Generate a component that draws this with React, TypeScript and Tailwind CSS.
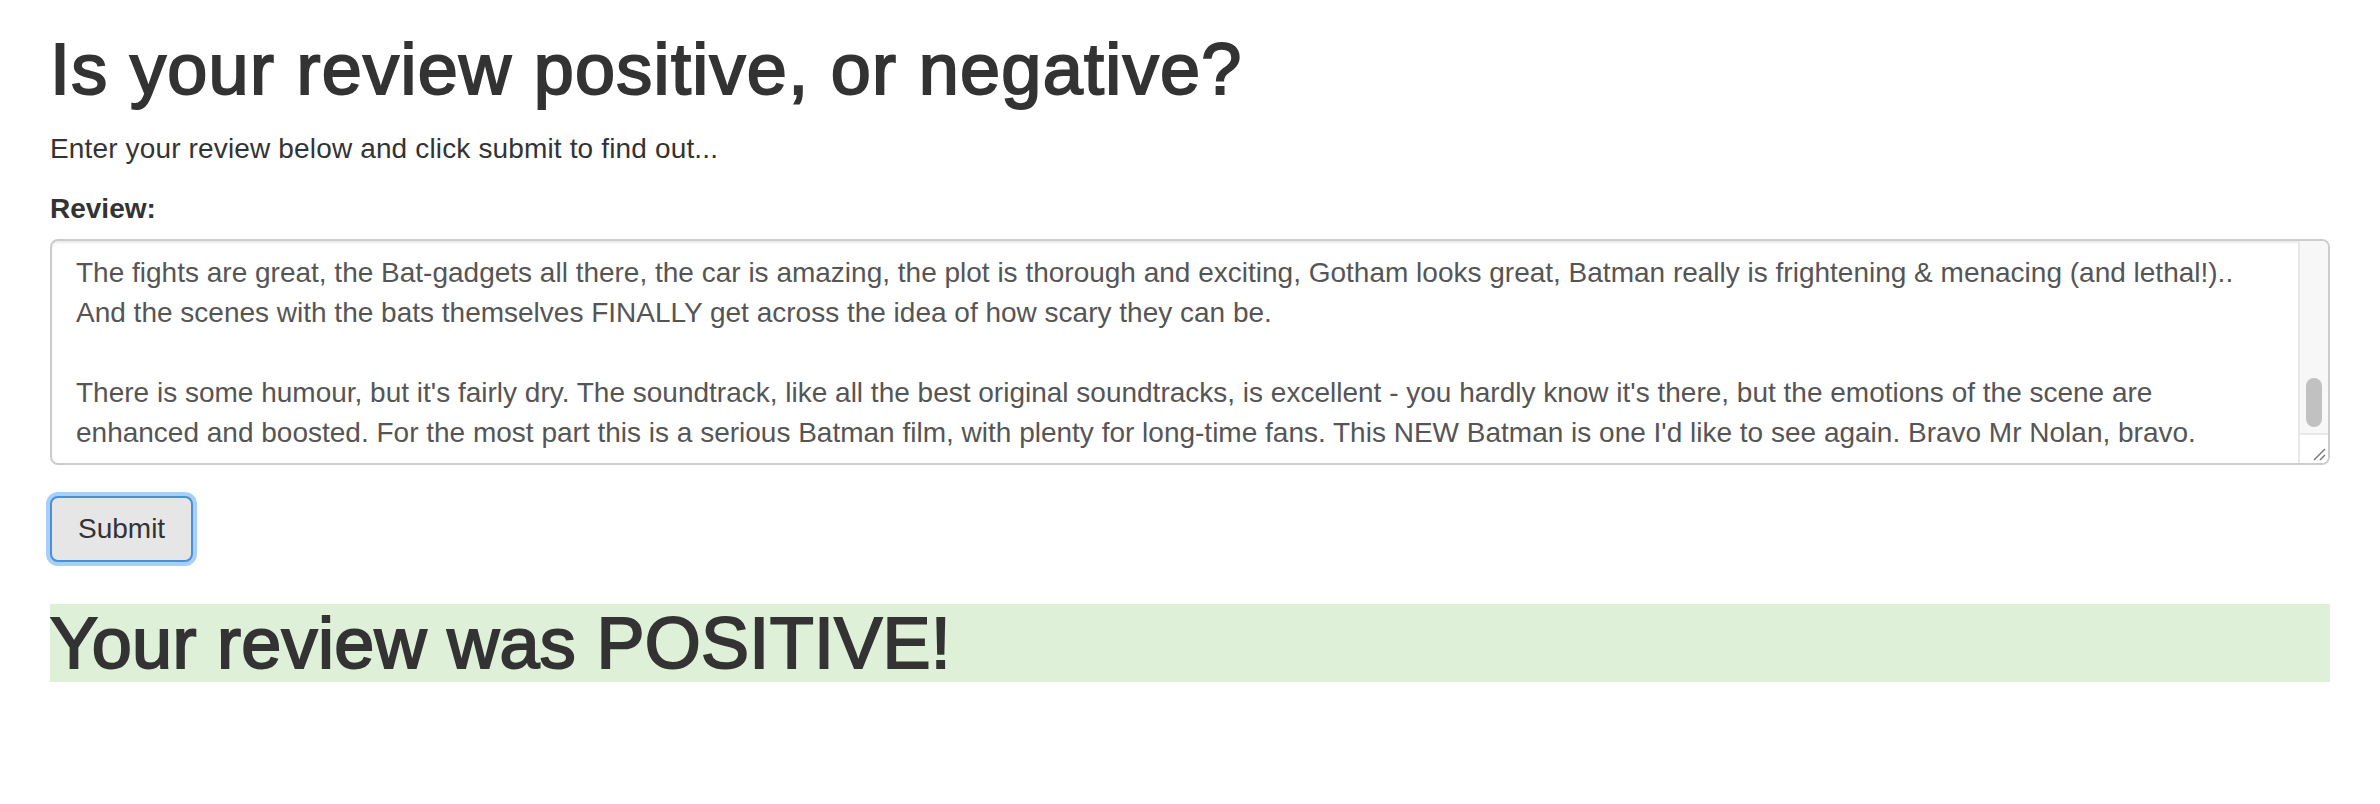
import React from "react";

const lines = [
  "The fights are great, the Bat-gadgets all there, the car is amazing, the plot is thorough and exciting, Gotham looks great, Batman really is frightening & menacing (and lethal!)..",
  "And the scenes with the bats themselves FINALLY get across the idea of how scary they can be.",
  "",
  "There is some humour, but it's fairly dry. The soundtrack, like all the best original soundtracks, is excellent - you hardly know it's there, but the emotions of the scene are",
  "enhanced and boosted. For the most part this is a serious Batman film, with plenty for long-time fans. This NEW Batman is one I'd like to see again. Bravo Mr Nolan, bravo.",
];

export default function App() {
  return (
    <div className="min-h-[804px] bg-white px-[50px] pt-[30px] font-['Liberation_Sans',Arial,sans-serif] text-[#333]">
      <h1 className="text-[72px] leading-[79px] font-normal tracking-[1.3px] [-webkit-text-stroke:2px_#333] mb-[20px]">
        Is your review positive, or negative?
      </h1>
      <p className="text-[28px] leading-[40px] tracking-[0.15px] mb-[20px]">
        Enter your review below and click submit to find out...
      </p>
      <div className="mb-[31px]">
        <label className="block text-[28px] leading-[40px] font-bold mb-[10px]">Review:</label>
        <div className="flex h-[226px] rounded-[8px] border-2 border-[#ccc] bg-white shadow-[inset_0_2px_2px_rgba(0,0,0,0.075)] overflow-hidden">
          <div className="flex-1 overflow-hidden px-[24px] pt-[12px] text-[28px] leading-[40px] text-[#555]">
            {lines.map((l, i) => (
              <div key={i} className="whitespace-nowrap h-[40px]">
                {l}
              </div>
            ))}
          </div>
          <div className="flex w-[30px] flex-col border-l-2 border-[#e8e8e8] bg-[#f7f7f7]">
            <div className="flex-1 pt-[137px]">
              <div className="mx-auto h-[49px] w-[16px] rounded-full bg-[#c1c1c1]" />
            </div>
            <div className="relative h-[30px] border-t-2 border-[#e8e8e8] bg-white">
              <svg className="absolute bottom-[2px] right-[2px]" width="14" height="14" viewBox="0 0 14 14">
                <line x1="13" y1="2" x2="2" y2="13" stroke="#777" strokeWidth="1.5" />
                <line x1="13" y1="8" x2="8" y2="13" stroke="#777" strokeWidth="1.5" />
              </svg>
            </div>
          </div>
        </div>
      </div>
      <button
        type="button"
        className="block h-[66px] rounded-[8px] border-2 border-[#4d8fd6] bg-[#e6e6e6] px-[26px] text-[28px] leading-[40px] text-[#333] shadow-[0_0_0_4px_#a6cff9]"
      >
        Submit
      </button>
      <h1 className="mt-[42px] bg-[#dff0d8] text-[72px] leading-[78px] font-normal tracking-[0.3px] [-webkit-text-stroke:2px_#333]">
        Your review was POSITIVE!
      </h1>
    </div>
  );
}
